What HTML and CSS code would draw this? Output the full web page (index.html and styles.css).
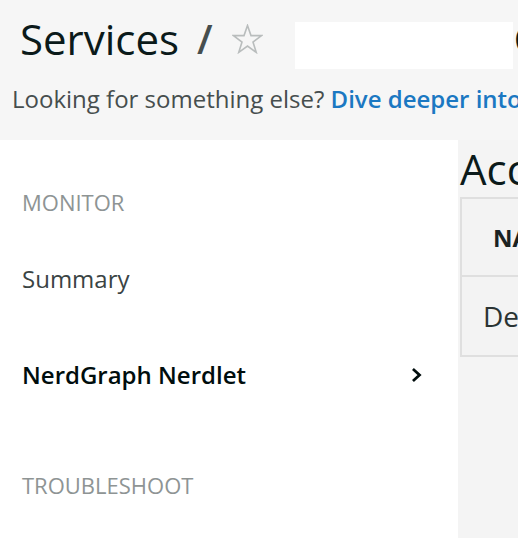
FILE: index.html
```html
<!DOCTYPE html>
<html>
<head>
<meta charset="utf-8">
<link rel="stylesheet" href="styles.css">
</head>
<body>
<header class="header">
  <div class="title-row">
    <h1 class="title">Services</h1>
    <span class="slash">/</span>
    <svg class="star" width="31" height="30" viewBox="0 0 31 30">
      <path d="M15.5 1.5 L19 11.6 L29.5 11.6 L21 18 L24.2 28.3 L15.5 22 L6.8 28.3 L10 18 L1.5 11.6 L12 11.6 Z" fill="none" stroke="#b9bdbd" stroke-width="1.6" stroke-linejoin="miter"/>
    </svg>
    <div class="search-box"></div>
    <span class="after-box">C</span>
  </div>
  <p class="subtitle">Looking for something else? <a class="link" href="#">Dive deeper into</a></p>
</header>
<div class="layout">
  <nav class="sidebar">
    <div class="section-label monitor">MONITOR</div>
    <div class="nav-item summary">Summary</div>
    <div class="nav-item active">
      <span>NerdGraph Nerdlet</span>
      <svg class="chevron" width="10" height="14" viewBox="0 0 10 14">
        <path d="M2 2 L7.5 7 L2 12" fill="none" stroke="#000d0d" stroke-width="2.8" stroke-linecap="square"/>
      </svg>
    </div>
    <div class="section-label troubleshoot">TROUBLESHOOT</div>
  </nav>
  <main class="main">
    <h2 class="main-title">Accounts</h2>
    <div class="table">
      <div class="thead">NAME</div>
      <div class="trow">Default</div>
    </div>
  </main>
</div>
</body>
</html>
```

FILE: styles.css
```css
* { box-sizing: border-box; }
html, body {
  margin: 0;
  padding: 0;
  overflow: hidden;
}
body {
  width: 518px;
  height: 538px;
  font-family: "Open Sans", "Noto Sans", sans-serif;
  background: #ffffff;
}
.header {
  background: #f6f6f6;
  height: 140px;
  padding: 10px 0 0 0;
  overflow: hidden;
}
.title-row {
  display: flex;
  align-items: flex-start;
  white-space: nowrap;
  padding-left: 20px;
}
.title {
  margin: 0;
  font-size: 42px;
  font-weight: 400;
  line-height: 57px;
  color: #0b1a1a;
}
.slash {
  font-size: 40px;
  line-height: 57px;
  font-weight: 600;
  color: #464e4e;
  margin-left: 18px;
}
.star {
  margin-left: 19px;
  margin-top: 14px;
  flex: none;
}
.search-box {
  flex: none;
  width: 218px;
  height: 47px;
  background: #ffffff;
  margin-left: 32px;
  margin-top: 12px;
}
.after-box {
  font-size: 40px;
  line-height: 57px;
  font-weight: 600;
  color: #0b1a1a;
  margin-left: 1px;
}
.subtitle {
  margin: 14px 0 0 0;
  padding-left: 12px;
  font-size: 24px;
  line-height: 32px;
  color: #464e4e;
  white-space: nowrap;
}
.link {
  color: #1b78c2;
  font-weight: 600;
  text-decoration: none;
}
.layout {
  display: flex;
  height: 398px;
}
.sidebar {
  width: 458px;
  flex: none;
  background: #ffffff;
  padding: 46px 0 0 22px;
  display: flex;
  flex-direction: column;
}
.section-label {
  font-size: 22px;
  line-height: 32px;
  color: #8e9494;
}
.nav-item {
  font-size: 24px;
  line-height: 32px;
  color: #3a4444;
}
.summary { margin-top: 45px; }
.nav-item.active {
  margin-top: 64px;
  font-weight: 600;
  color: #000d0d;
  display: flex;
  align-items: center;
  justify-content: space-between;
  padding-right: 36px;
}
.chevron { flex: none; }
.troubleshoot { margin-top: 78px; }
.main {
  flex: 1;
  background: #f4f4f4;
  padding: 0 0 0 2px;
  overflow: hidden;
  white-space: nowrap;
}
.main-title {
  margin: 0;
  font-size: 42px;
  font-weight: 400;
  line-height: 57px;
  color: #0b1a1a;
}
.table {
  width: 300px;
  border: 2px solid #dfdfdf;
  border-right: none;
  background: #f3f3f3;
}
.thead {
  height: 78px;
  border-bottom: 2px solid #dfdfdf;
  padding-left: 31px;
  font-size: 24px;
  font-weight: 700;
  line-height: 78px;
  color: #1a2222;
}
.trow {
  height: 78px;
  padding-left: 21px;
  font-size: 28px;
  line-height: 78px;
  color: #2a3333;
}
```
